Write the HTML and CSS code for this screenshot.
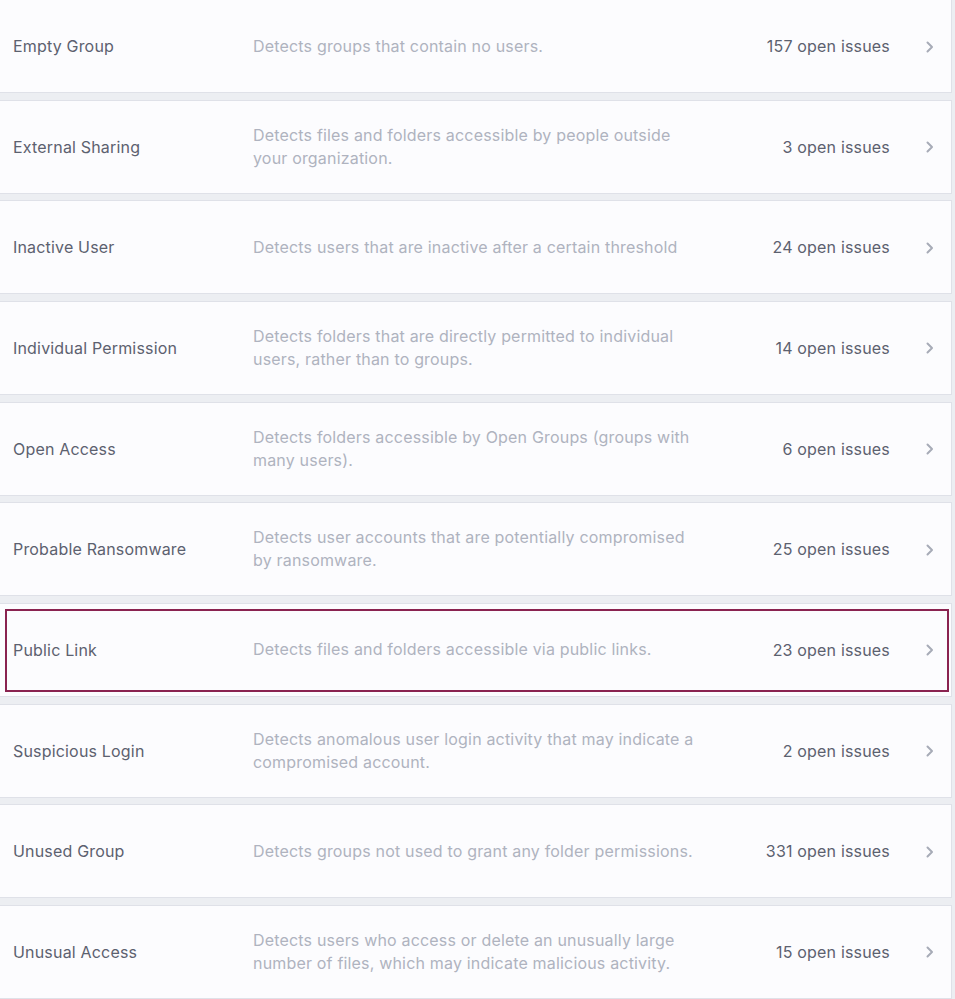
FILE: index.html
```html
<!DOCTYPE html>
<html lang="en">
<head>
<meta charset="utf-8">
<title>Detectors</title>
<link rel="stylesheet" href="styles.css">
</head>
<body>
<main class="list">
  <div class="row">
    <div class="title">Empty Group</div>
    <div class="desc">Detects groups that contain no users.</div>
    <div class="count">157 open issues</div>
    <div class="chev"><svg viewBox="0 0 8 12" width="8" height="12"><path d="M1.5 1.5 L6 6 L1.5 10.5" /></svg></div>
  </div>
  <div class="row">
    <div class="title">External Sharing</div>
    <div class="desc">Detects files and folders accessible by people outside your organization.</div>
    <div class="count">3 open issues</div>
    <div class="chev"><svg viewBox="0 0 8 12" width="8" height="12"><path d="M1.5 1.5 L6 6 L1.5 10.5" /></svg></div>
  </div>
  <div class="row">
    <div class="title">Inactive User</div>
    <div class="desc">Detects users that are inactive after a certain threshold</div>
    <div class="count">24 open issues</div>
    <div class="chev"><svg viewBox="0 0 8 12" width="8" height="12"><path d="M1.5 1.5 L6 6 L1.5 10.5" /></svg></div>
  </div>
  <div class="row">
    <div class="title">Individual Permission</div>
    <div class="desc">Detects folders that are directly permitted to individual users, rather than to groups.</div>
    <div class="count">14 open issues</div>
    <div class="chev"><svg viewBox="0 0 8 12" width="8" height="12"><path d="M1.5 1.5 L6 6 L1.5 10.5" /></svg></div>
  </div>
  <div class="row">
    <div class="title">Open Access</div>
    <div class="desc">Detects folders accessible by Open Groups (groups with many users).</div>
    <div class="count">6 open issues</div>
    <div class="chev"><svg viewBox="0 0 8 12" width="8" height="12"><path d="M1.5 1.5 L6 6 L1.5 10.5" /></svg></div>
  </div>
  <div class="row">
    <div class="title">Probable Ransomware</div>
    <div class="desc">Detects user accounts that are potentially compromised by ransomware.</div>
    <div class="count">25 open issues</div>
    <div class="chev"><svg viewBox="0 0 8 12" width="8" height="12"><path d="M1.5 1.5 L6 6 L1.5 10.5" /></svg></div>
  </div>
  <div class="row row-focus">
    <div class="title">Public Link</div>
    <div class="desc">Detects files and folders accessible via public links.</div>
    <div class="count">23 open issues</div>
    <div class="chev"><svg viewBox="0 0 8 12" width="8" height="12"><path d="M1.5 1.5 L6 6 L1.5 10.5" /></svg></div>
    <div class="focus-ring"></div>
  </div>
  <div class="row">
    <div class="title">Suspicious Login</div>
    <div class="desc">Detects anomalous user login activity that may indicate a compromised account.</div>
    <div class="count">2 open issues</div>
    <div class="chev"><svg viewBox="0 0 8 12" width="8" height="12"><path d="M1.5 1.5 L6 6 L1.5 10.5" /></svg></div>
  </div>
  <div class="row">
    <div class="title">Unused Group</div>
    <div class="desc">Detects groups not used to grant any folder permissions.</div>
    <div class="count">331 open issues</div>
    <div class="chev"><svg viewBox="0 0 8 12" width="8" height="12"><path d="M1.5 1.5 L6 6 L1.5 10.5" /></svg></div>
  </div>
  <div class="row">
    <div class="title">Unusual Access</div>
    <div class="desc">Detects users who access or delete an unusually large number of files, which may indicate malicious activity.</div>
    <div class="count">15 open issues</div>
    <div class="chev"><svg viewBox="0 0 8 12" width="8" height="12"><path d="M1.5 1.5 L6 6 L1.5 10.5" /></svg></div>
  </div>
</main>
</body>
</html>
```

FILE: styles.css
```css
html, body {
  margin: 0;
  padding: 0;
  background: #eceef2;
}

body {
  font-family: Inter, "Noto Sans", "Liberation Sans", sans-serif;
  font-size: 16px;
  letter-spacing: 0.18px;
  overflow: hidden;
}

.list {
  display: flex;
  flex-direction: column;
  gap: 6.67px;
  width: 952px;
  margin-top: -1px;
}

.row {
  position: relative;
  box-sizing: border-box;
  height: 94px;
  display: grid;
  grid-template-columns: 240px 447px 1fr 61px;
  align-items: center;
  padding-left: 13px;
  background: #fcfcfe;
  border: 1px solid #dfe1e8;
  border-left: none;
}

.title {
  color: #5c616f;
  line-height: 22px;
}

.desc {
  color: #afb3bf;
  line-height: 23px;
}

.count {
  color: #5c616f;
  text-align: right;
  line-height: 22px;
}

.chev {
  display: flex;
  justify-content: center;
  align-items: center;
  padding-left: 18px;
  padding-top: 1px;
}

.chev svg path {
  fill: none;
  stroke: #a7abb7;
  stroke-width: 2;
  stroke-linecap: round;
  stroke-linejoin: round;
}

.focus-ring {
  position: absolute;
  top: 5px;
  left: 5px;
  right: 2px;
  bottom: 4px;
  border: 2.5px solid #8a2350;
  pointer-events: none;
}
```
